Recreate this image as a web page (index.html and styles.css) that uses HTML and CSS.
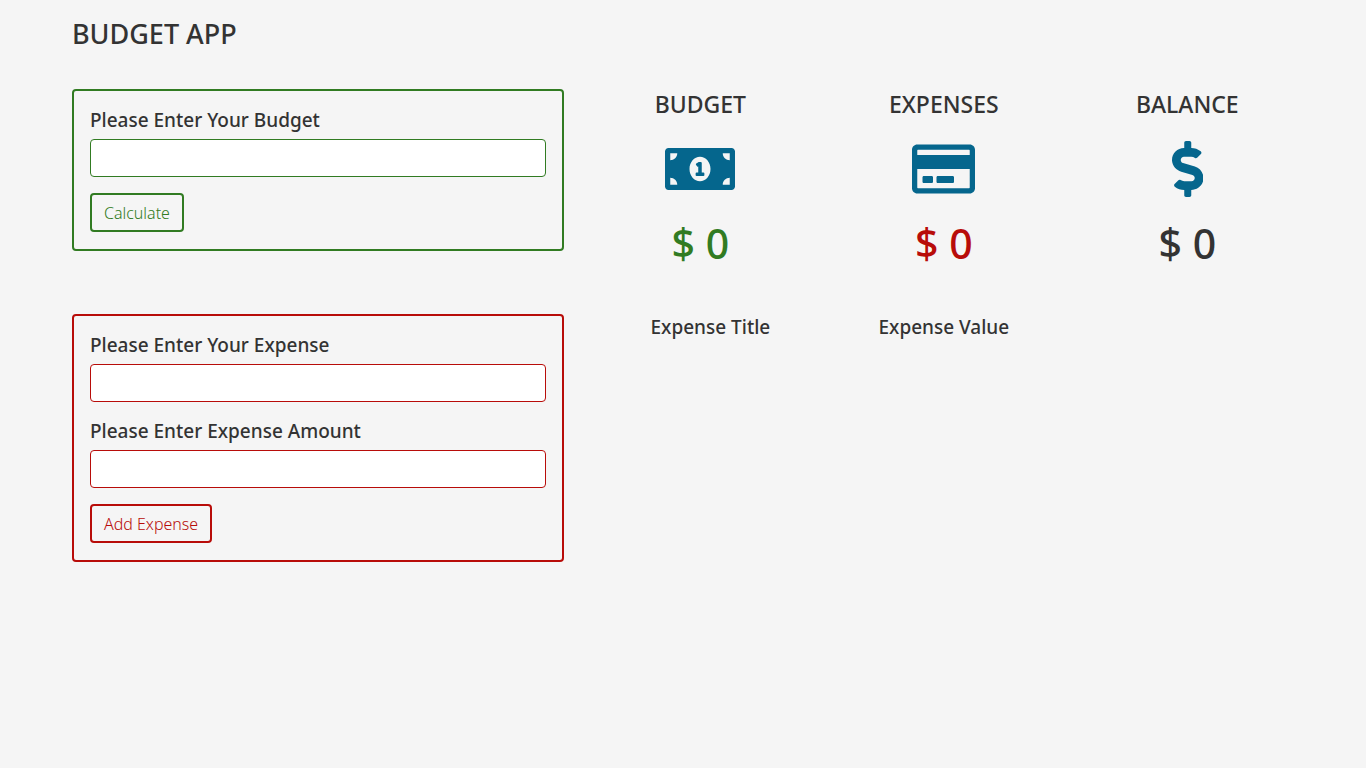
FILE: index.html
```html
<!DOCTYPE html>
<html lang="en">
<head>
<meta charset="utf-8">
<meta name="viewport" content="width=device-width, initial-scale=1">
<title>Budget App</title>
<link rel="stylesheet" href="styles.css">
</head>
<body>
<main class="app">
  <h1 class="app-title">Budget App</h1>
  <div class="row row-top">
    <form class="panel panel-budget">
      <div class="field">
        <label class="field-label" for="budget-input">Please Enter Your Budget</label>
        <input class="field-input" type="number" id="budget-input">
      </div>
      <button class="button" type="button">Calculate</button>
    </form>
    <section class="stats" aria-label="Summary">
      <div class="stat">
        <h2 class="stat-title">Budget</h2>
        <svg class="stat-icon" viewBox="0 0 640 512" aria-hidden="true"><path d="M352 288h-16v-88c0-4.42-3.58-8-8-8h-13.58c-4.74 0-9.38 1.4-13.31 4.03l-15.33 10.22a7.994 7.994 0 0 0-2.22 11.09l8.88 13.31a7.994 7.994 0 0 0 11.09 2.22l.47-.31V288h-16c-4.42 0-8 3.58-8 8v16c0 4.42 3.58 8 8 8h64c4.42 0 8-3.58 8-8v-16c0-4.42-3.58-8-8-8zM608 64H32C14.33 64 0 78.33 0 96v320c0 17.67 14.33 32 32 32h576c17.67 0 32-14.33 32-32V96c0-17.67-14.33-32-32-32zM48 400v-64c35.35 0 64 28.65 64 64H48zm0-224v-64h64c0 35.35-28.65 64-64 64zm272 192c-53.02 0-96-50.15-96-112 0-61.86 42.98-112 96-112s96 50.13 96 112c0 61.87-42.98 112-96 112zm272 32h-64c0-35.35 28.65-64 64-64v64zm0-224c-35.35 0-64-28.65-64-64h64v64z"/></svg>
        <p class="stat-amount amount-budget">$ 0</p>
      </div>
      <div class="stat">
        <h2 class="stat-title">Expenses</h2>
        <svg class="stat-icon" viewBox="0 0 576 512" aria-hidden="true"><path d="M527.9 32H48.1C21.5 32 0 53.5 0 80v352c0 26.5 21.5 48 48.1 48h479.8c26.6 0 48.1-21.5 48.1-48V80c0-26.5-21.5-48-48.1-48zM54.1 80h467.8c3.3 0 6 2.7 6 6v42H48.1V86c0-3.3 2.7-6 6-6zm467.8 352H54.1c-3.3 0-6-2.7-6-6V256h479.8v170c0 3.3-2.7 6-6 6zM192 332v40c0 6.6-5.4 12-12 12h-72c-6.6 0-12-5.4-12-12v-40c0-6.6 5.4-12 12-12h72c6.6 0 12 5.4 12 12zm192 0v40c0 6.6-5.4 12-12 12H236c-6.6 0-12-5.4-12-12v-40c0-6.6 5.4-12 12-12h136c6.6 0 12 5.4 12 12z"/></svg>
        <p class="stat-amount amount-expense">$ 0</p>
      </div>
      <div class="stat">
        <h2 class="stat-title">Balance</h2>
        <svg class="stat-icon" viewBox="0 0 288 512" aria-hidden="true"><path d="M209.2 233.4l-108-31.6C88.7 198.2 80 186.5 80 173.5c0-16.3 13.2-29.5 29.5-29.5h66.3c12.2 0 24.2 3.7 34.2 10.5 6.1 4.1 14.3 3.1 19.5-2l34.8-34c7.1-6.9 6.1-18.4-1.8-24.5C238 74.8 207.4 64.1 176 64V16c0-8.8-7.2-16-16-16h-32c-8.8 0-16 7.2-16 16v48h-2.5C45.8 64-5.4 118.7.5 183.6c4.2 46.1 39.4 83.6 83.8 96.6l102.5 30c12.5 3.7 21.2 15.3 21.2 28.3 0 16.3-13.2 29.5-29.5 29.5h-66.3C100 368 88 364.3 78 357.5c-6.1-4.1-14.3-3.1-19.5 2l-34.8 34c-7.1 6.9-6.1 18.4 1.8 24.5 24.5 19.2 55.1 29.9 86.5 30v48c0 8.8 7.2 16 16 16h32c8.8 0 16-7.2 16-16v-48.2c46.6-.9 90.3-28.6 105.7-72.7 21.5-61.6-14.6-124.8-72.5-141.7z"/></svg>
        <p class="stat-amount">$ 0</p>
      </div>
    </section>
  </div>
  <div class="row">
    <form class="panel panel-expense">
      <div class="field">
        <label class="field-label" for="expense-input">Please Enter Your Expense</label>
        <input class="field-input" type="text" id="expense-input">
      </div>
      <div class="field">
        <label class="field-label" for="amount-input">Please Enter Expense Amount</label>
        <input class="field-input" type="number" id="amount-input">
      </div>
      <button class="button" type="button">Add Expense</button>
    </form>
    <section class="list-head" aria-label="Expense list">
      <h2 class="list-title">Expense Title</h2>
      <h2 class="list-title">Expense Value</h2>
    </section>
  </div>
</main>
</body>
</html>
```
FILE: styles.css
```css
:root {
  --green: #317b22;
  --red: #b80c09;
  --blue: #05668d;
  --dark: #333333;
}

* {
  box-sizing: border-box;
}

body {
  margin: 0;
  background: #f5f5f5;
  color: var(--dark);
  font-family: "Segoe UI", "Noto Sans", sans-serif;
  font-size: 16px;
  line-height: 24px;
}

h1, h2, p {
  margin: 0;
  font-weight: 500;
}

.app {
  width: calc(100% * 11 / 12);
  margin: 0 auto;
  padding: 17px 15px;
}

.app-title {
  margin-bottom: 38px;
  font-size: 27px;
  line-height: 34px;
  text-transform: uppercase;
}

.row {
  display: grid;
  grid-template-columns: 5fr 7fr;
  align-items: start;
  margin: 0 -15px;
}

.row-top {
  margin-bottom: 47px;
}

.panel {
  --accent: var(--green);
  margin: 0 15px;
  padding: 16px 16px 17px;
  border: 2px solid var(--accent);
  border-radius: 4px;
}

.panel-expense {
  --accent: var(--red);
}

.field {
  margin-bottom: 16px;
}

.field-label {
  display: block;
  margin-bottom: 6px;
  font-size: 19px;
  font-weight: 500;
  line-height: 26px;
}

.field-input {
  display: block;
  width: 100%;
  height: 38px;
  padding: 6px 12px;
  border: 1px solid var(--accent);
  border-radius: 4px;
  background: #ffffff;
  color: var(--dark);
  font: inherit;
}

.button {
  display: block;
  padding: 6px 12px;
  height: 39px;
  border: 2px solid var(--accent);
  border-radius: 4px;
  background: transparent;
  color: var(--accent);
  font-family: inherit;
  font-size: 16px;
  font-weight: 300;
  line-height: 24px;
}

.stats {
  display: grid;
  grid-template-columns: repeat(3, 1fr);
}

.stat {
  display: flex;
  flex-direction: column;
  align-items: center;
}

.stat-title {
  margin-bottom: 22px;
  font-size: 23px;
  line-height: 30px;
  text-transform: uppercase;
}

.stat-icon {
  height: 56px;
  fill: var(--blue);
}

.stat-amount {
  margin-top: 22px;
  font-size: 41px;
  line-height: 48px;
}

.amount-budget {
  color: var(--green);
}

.amount-expense {
  color: var(--red);
}

.list-head {
  display: grid;
  grid-template-columns: repeat(3, 1fr);
  margin: 0 15px;
  text-align: center;
}

.list-title {
  font-size: 19px;
  line-height: 26px;
}
```
